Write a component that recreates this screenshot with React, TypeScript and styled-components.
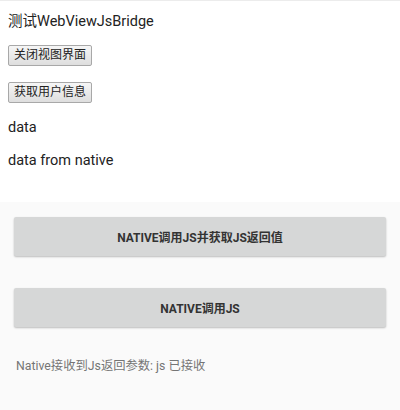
import React from "react";
import styled, { createGlobalStyle } from "styled-components";

const Global = createGlobalStyle`
  html, body { margin: 0; padding: 0; background: #fafafa; }
  body { font-family: Roboto, "Noto Sans CJK SC", sans-serif; }
`;

const Page = styled.div`
  width: 400px;
  height: 410px;
  display: flex;
  flex-direction: column;
  background: #fafafa;
`;

const WebArea = styled.div`
  background: #ffffff;
  height: 202px;
  box-sizing: border-box;
  padding: 11px 8px 0 8px;
  display: flex;
  flex-direction: column;
  align-items: flex-start;
  border-top: 1px solid #ececec;
`;

const Line = styled.div<{ $mt?: number }>`
  font-size: 14.5px;
  line-height: 20px;
  color: #222;
  margin-top: ${(p) => p.$mt ?? 0}px;
`;

const SmallButton = styled.button<{ $mt: number }>`
  margin-top: ${(p) => p.$mt}px;
  height: 21px;
  padding: 0 5px;
  font-family: Roboto, "Noto Sans CJK SC", sans-serif;
  font-size: 12px;
  color: #222;
  border: 1px solid #a8a8a8;
  border-radius: 2px;
  background: linear-gradient(#f6f6f6, #dedede);
  line-height: 19px;
`;

const NativeArea = styled.div`
  flex: 1;
  padding: 15px 14px 0 14px;
  display: flex;
  flex-direction: column;
`;

const NativeButton = styled.div<{ $mt: number }>`
  margin-top: ${(p) => p.$mt}px;
  height: 39px;
  background: #d6d7d7;
  border-radius: 2px;
  box-shadow: 0 1px 2px rgba(0, 0, 0, 0.25);
  display: flex;
  align-items: center;
  justify-content: center;
  font-size: 12px;
  font-weight: 700;
  color: #333;
`;

const Status = styled.div`
  margin-top: 31px;
  padding-left: 2px;
  font-size: 12.3px;
  color: #757575;
  line-height: 16px;
`;

export default function App() {
  return (
    <Page>
      <Global />
      <WebArea>
        <Line>测试WebViewJsBridge</Line>
        <SmallButton $mt={13}>关闭视图界面</SmallButton>
        <SmallButton $mt={16}>获取用户信息</SmallButton>
        <Line $mt={15}>data</Line>
        <Line $mt={13}>data from native</Line>
      </WebArea>
      <NativeArea>
        <NativeButton $mt={0}>NATIVE调用JS并获取JS返回值</NativeButton>
        <NativeButton $mt={32}>NATIVE调用JS</NativeButton>
        <Status>Native接收到Js返回参数: js 已接收</Status>
      </NativeArea>
    </Page>
  );
}
